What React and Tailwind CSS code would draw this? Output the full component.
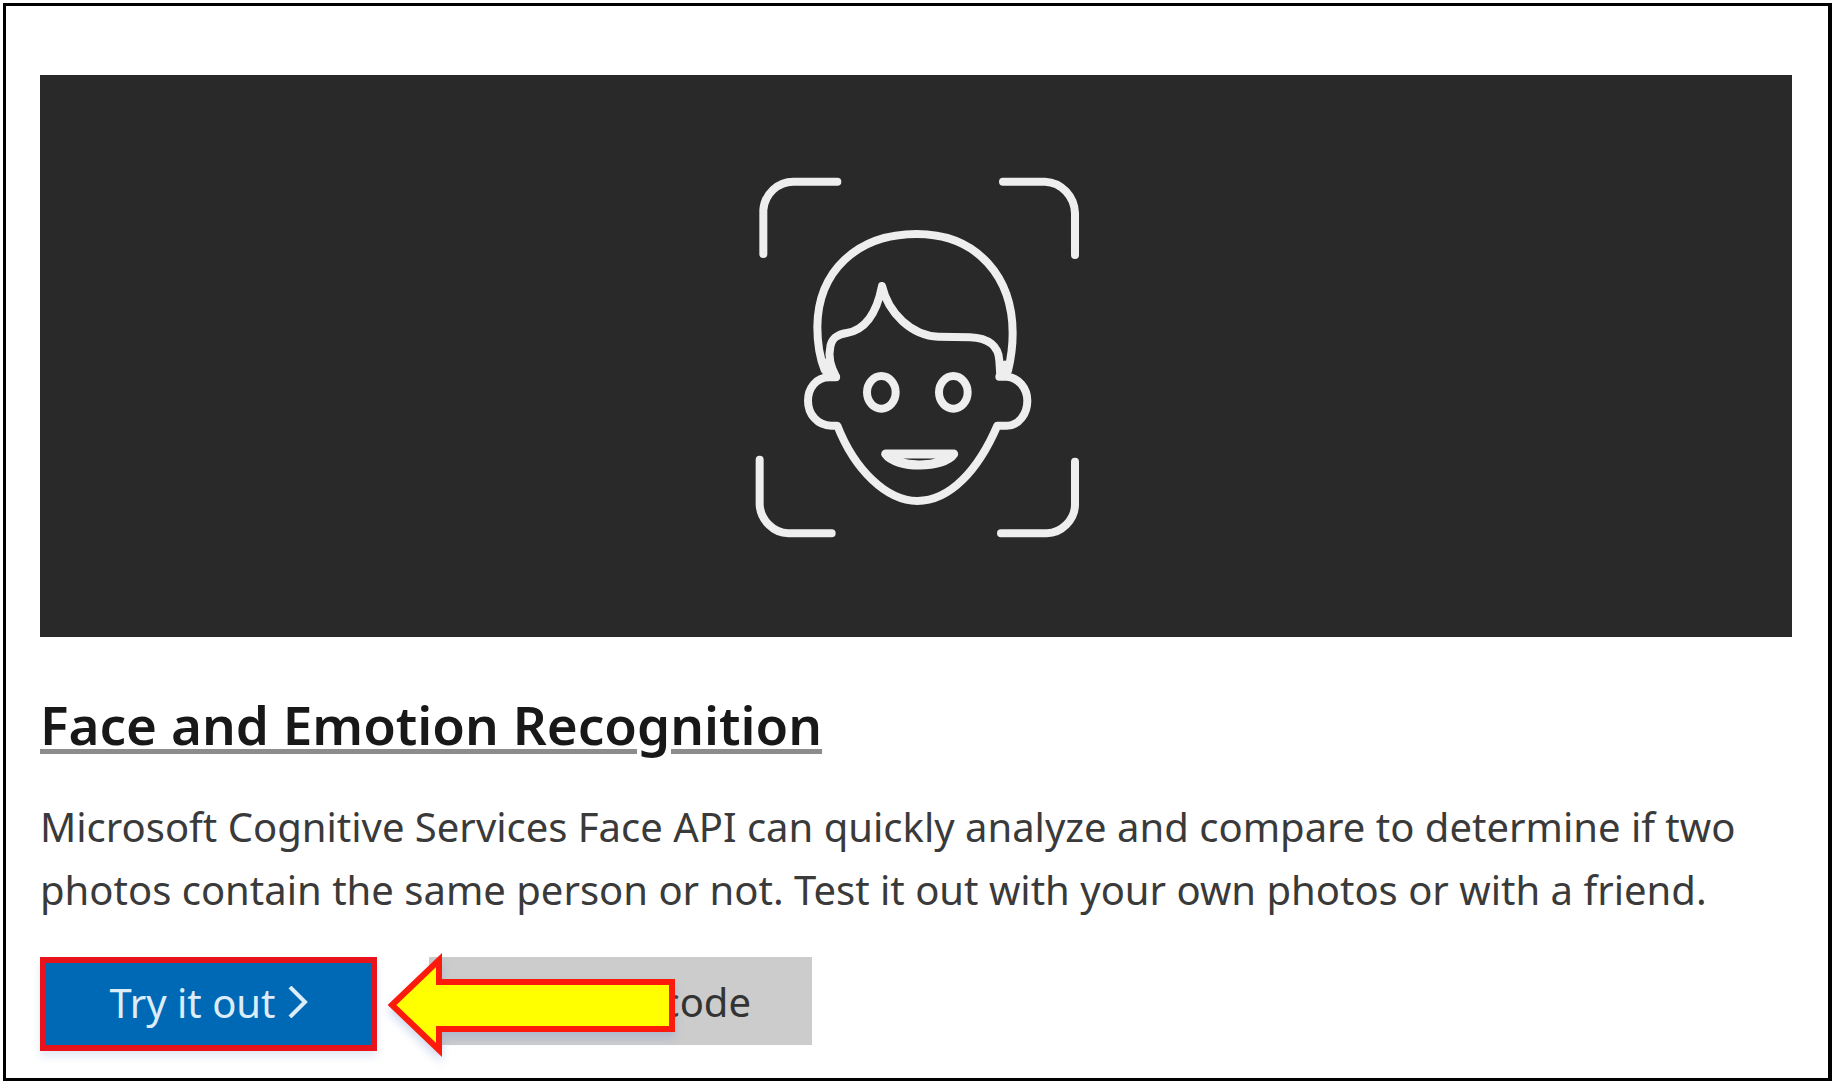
function FaceIcon() {
  return (
    <svg
      className="h-[410px] w-[372px]"
      viewBox="0 3 1116 1230"
      fill="none"
      stroke="#eeeeee"
      strokeWidth="24"
      strokeLinecap="round"
      strokeLinejoin="round"
      role="img"
      aria-label="Face detection"
    >
      {/* Viewfinder corners */}
      <path d="M100 312 V180 C104 130 145 95 190 95 H322" />
      <path d="M819 95 H945 C995 97 1034 140 1035 190 V315" />
      <path d="M89 929 V1065 C92 1110 130 1149 175 1150 H305" />
      <path d="M813 1150 H950 C995 1149 1034 1110 1035 1065 V935" />
      {/* Hair */}
      <path d="M284 660 C268 620 262 575 262 530 C264 365 380 252 560 252 C745 252 848 385 848 550 C848 595 842 630 834 662" />
      <path d="M318 680 C296 640 296 612 301 590 C306 562 325 553 350 549 C405 540 440 490 456 408 C475 490 545 557 625 560 L720 562 C775 564 806 588 808 632 L811 678" />
      <path d="M280 630 L318 682 H292 Z M824 640 L808 680 H834 Z M456 408 L446 440 H468 Z" fill="#eeeeee" strokeWidth="16" />
      {/* Ears and jaw */}
      <path d="M318 682 H298 C257 682 234 716 234 752 C234 792 262 827 304 827 H322 C374 960 470 1053 562 1053 C660 1053 745 960 802 827 H830 C868 827 892 790 892 752 C892 716 866 682 830 680 H808" />
      {/* Eyes */}
      <ellipse cx="454" cy="727" rx="43" ry="49" />
      <ellipse cx="670" cy="727" rx="43" ry="49" />
      {/* Mouth */}
      <path d="M467 912 H671 C642 955 498 957 467 912 Z" strokeWidth="27" />
    </svg>
  );
}

function Arrow() {
  return (
    <svg
      className="pointer-events-none absolute -top-1 left-[348px] h-[104px] w-[288px] overflow-visible drop-shadow-[0_6px_5px_rgba(120,150,210,0.35)]"
      viewBox="388 953 288 104"
      aria-hidden="true"
    >
      <path
        d="M392 1005 L439 960 V982 H672 V1029 H439 V1050 Z"
        fill="#ffff00"
        stroke="#fb1a0c"
        strokeWidth="6"
        strokeMiterlimit="10"
      />
    </svg>
  );
}

export default function App() {
  return (
    <main className="bg-white pt-[3px] pl-[3px] font-['Noto_Sans',sans-serif]">
      <article className="border-[3px] border-r-4 border-black pt-[69px] pr-9 pb-[27px] pl-[34px]">
        <div className="flex h-[562px] items-center justify-center bg-[#292929]">
          <FaceIcon />
        </div>

        <h2 className="mt-[52px] text-[53px] leading-[72px] font-semibold text-[#181818]">
          <a
            href="#face"
            className="underline decoration-[#8c8c8c] decoration-[5px] underline-offset-4"
          >
            Face and Emotion Recognition
          </a>
        </h2>

        <p className="mt-[34px] text-[40px] leading-[63px] text-[#3a3a3a]">
          Microsoft Cognitive Services Face API can quickly analyze and compare to determine if two
          <br />
          photos contain the same person or not. Test it out with your own photos or with a friend.
        </p>

        <div className="relative mt-9 flex items-start gap-[52px] text-[40px] leading-[63px]">
          <button
            type="button"
            className="flex h-[94px] w-[337px] items-center justify-center gap-3 border-[6px] border-[#e8131b] bg-[#0069b6] pb-1 text-[#dcecf8] shadow-[0_6px_8px_rgba(120,150,210,0.2)]"
          >
            Try it out
            <svg className="h-8 w-5" viewBox="0 0 20 32" fill="none" stroke="currentColor" strokeWidth="4" aria-hidden="true">
              <path d="M2 1 L17 16 L2 31" />
            </svg>
          </button>
          <button
            type="button"
            className="flex h-[88px] w-[383px] items-center justify-end bg-[#cccccc] pr-[61px] text-[#333333]"
          >
            Source code
          </button>
          <Arrow />
        </div>
      </article>
    </main>
  );
}
